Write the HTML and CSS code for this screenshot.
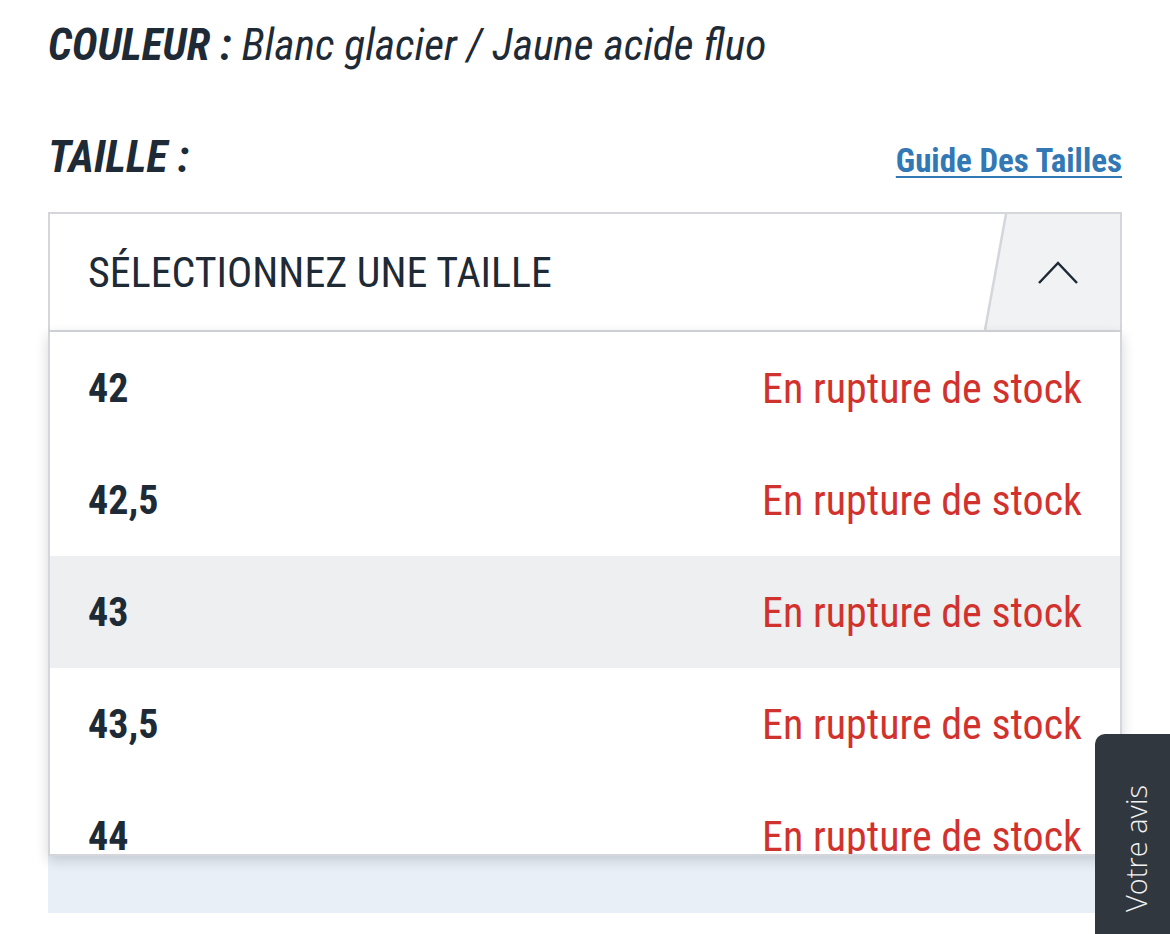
FILE: index.html
```html
<!DOCTYPE html>
<html lang="fr">
<head>
    <meta charset="UTF-8">
    <meta name="viewport" content="width=device-width, initial-scale=1.0">
    <title>Choix de la taille</title>
    <link rel="stylesheet" href="styles.css">
</head>
<body>
    <div class="product">
        <div class="color-line">
            <b>COULEUR :</b> <span>Blanc glacier / Jaune acide fluo</span>
        </div>

        <div class="size-line">
            <b>TAILLE :</b>
            <a href="#" class="guide">Guide Des Tailles</a>
        </div>

        <div class="size-select">
            <div class="select-head">
                <span class="select-label">SÉLECTIONNEZ UNE TAILLE</span>
                <svg class="select-toggle" width="136" height="116" viewBox="0 0 136 116">
                    <polygon points="22,0 136,0 136,116 1,116" fill="#f1f2f4"/>
                    <line x1="22" y1="0" x2="1" y2="116" stroke="#d4d6db" stroke-width="2.5"/>
                    <polyline points="55,69 74,49 93,69" fill="none" stroke="#1e2a35" stroke-width="2.5"/>
                </svg>
            </div>
            <ul class="size-list">
                <li><b>42</b><span class="out">En rupture de stock</span></li>
                <li><b>42,5</b><span class="out">En rupture de stock</span></li>
                <li class="hover"><b>43</b><span class="out">En rupture de stock</span></li>
                <li><b>43,5</b><span class="out">En rupture de stock</span></li>
                <li><b>44</b><span class="out">En rupture de stock</span></li>
                <li><b>44,5</b><span class="out">En rupture de stock</span></li>
            </ul>
        </div>
        <div class="add-bar"></div>
    </div>

    <!-- onglet de feedback collé au bord droit -->
    <div class="feedback-tab"><span>Votre avis</span></div>
</body>
</html>
```

FILE: styles.css
```css
body {
    margin: 0;
    background-color: #fff;
    color: #1e2a35;
    font-family: "Roboto Condensed", "Liberation Sans Narrow", Roboto, sans-serif;
    font-stretch: condensed;
}

.product {
    padding: 21px 48px 0 48px;
}

.color-line {
    font-size: 43.5px;
    line-height: 50px;
    font-style: italic;
}
.color-line b {
    font-weight: 700;
}
.color-line span {
    font-weight: 400;
}

.size-line {
    display: flex;
    justify-content: space-between;
    align-items: baseline;
    margin-top: 61px;
    font-size: 44px;
    line-height: 50px;
    font-style: italic;
}

.guide {
    font-size: 33px;
    font-style: normal;
    font-weight: 700;
    color: #3178b5;
    text-decoration: underline;
    text-decoration-thickness: 2px;
    text-underline-offset: 4px;
}

.size-select {
    margin-top: 26px;
}

.select-head {
    display: flex;
    align-items: center;
    height: 120px;
    box-sizing: border-box;
    border: 2px solid #d4d6db;
    background-color: #fff;
}
.select-label {
    flex: 1;
    padding-left: 38px;
    font-size: 42px;
}
.select-toggle {
    display: block;
}

.size-list {
    list-style: none;
    margin: 0;
    padding: 0;
    max-height: 524px;
    overflow: hidden;
    box-sizing: border-box;
    border: 2px solid #d4d6db;
    border-top: none;
    background-color: #fff;
    box-shadow: 0 4px 12px rgba(20, 30, 45, 0.18);
    position: relative;
    z-index: 1;
}
.size-list li {
    display: flex;
    justify-content: space-between;
    align-items: center;
    height: 112px;
    padding: 0 38px;
    font-size: 40px;
}
.size-list li b {
    font-weight: 700;
}
.size-list li.hover {
    background-color: #eeeff1;
}
.out {
    font-size: 42px;
    color: #d2322d;
}

.add-bar {
    height: 57px;
    background-color: #e9eff6;
}

.feedback-tab {
    position: fixed;
    right: 0;
    bottom: 0;
    width: 75px;
    height: 200px;
    display: flex;
    flex-direction: column;
    justify-content: flex-end;
    align-items: center;
    padding: 0 0 22px 6px;
    box-sizing: border-box;
    background-color: #31373e;
    border-radius: 10px 0 0 0;
    z-index: 2;
}
.feedback-tab span {
    writing-mode: vertical-rl;
    transform: rotate(180deg);
    font-family: "Open Sans", sans-serif;
    font-stretch: normal;
    font-weight: 300;
    font-size: 29px;
    color: #f1f2f3;
}
```
